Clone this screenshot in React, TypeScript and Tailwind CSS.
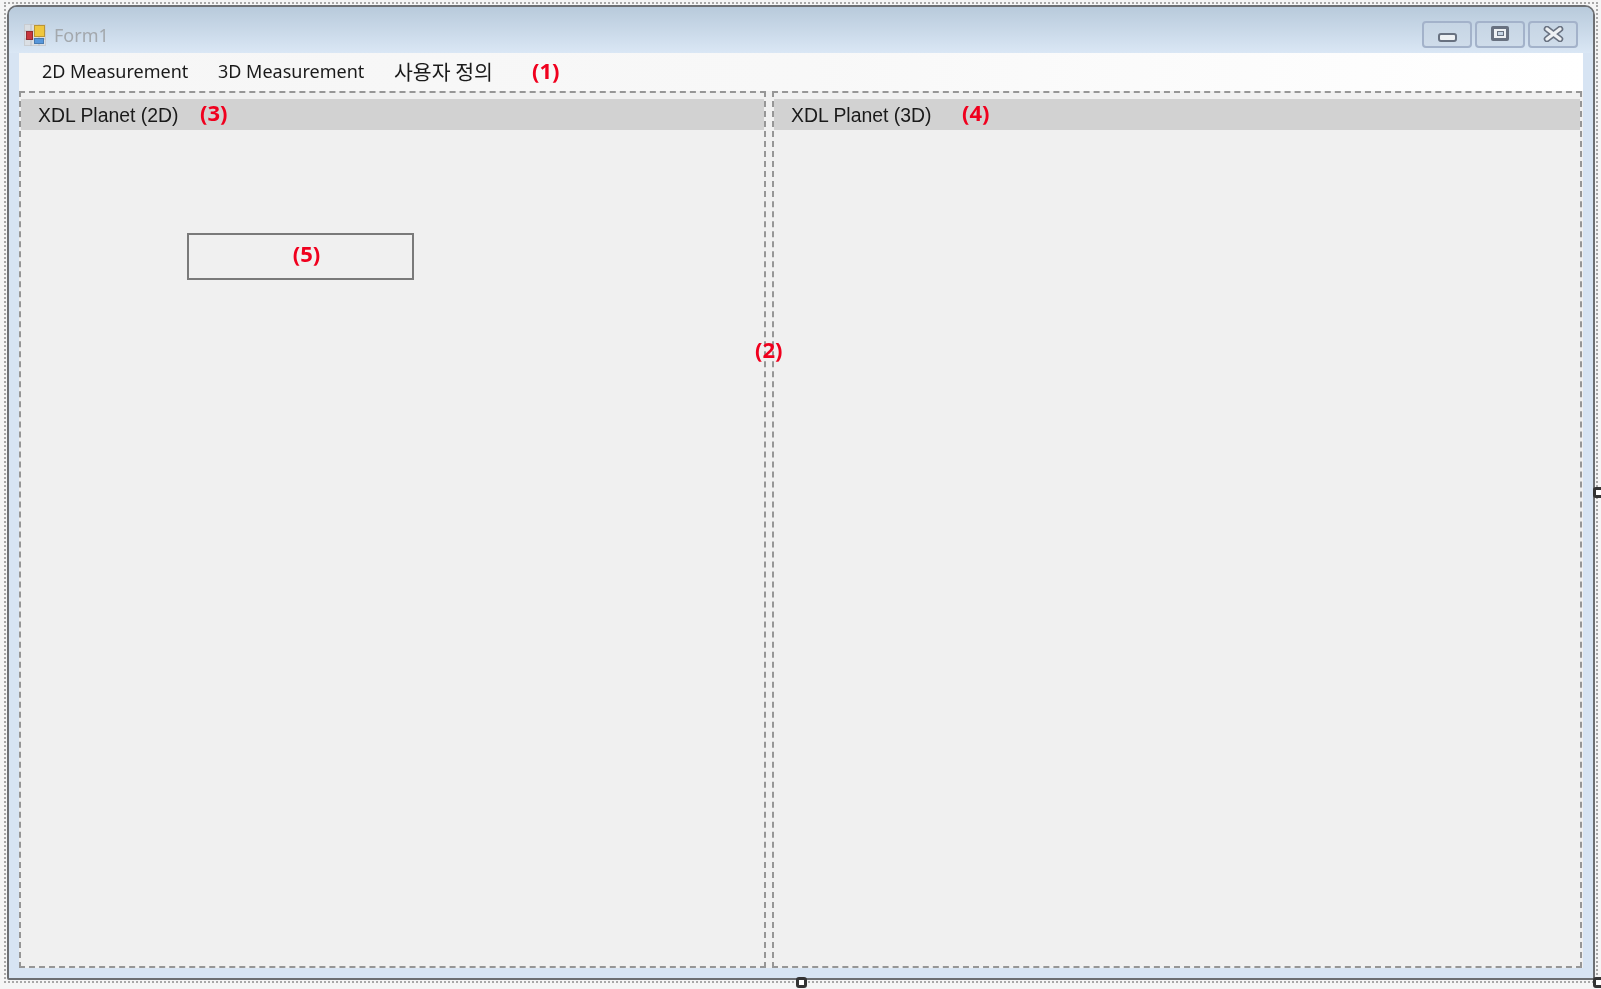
const label = "font-['Open_Sans',sans-serif] text-[22px] leading-none font-bold text-[#f0001e]";
const menu = "font-['Noto_Sans',sans-serif] text-[18px] leading-none text-[#1a1a1a]";
const head = "font-['Liberation_Sans',sans-serif] text-[19.4px] leading-none text-[#1a1a1a]";

function AppIcon() {
  return (
    <svg width="22" height="22" viewBox="0 0 22 22" className="opacity-90">
      <rect x="0.5" y="0.5" width="21" height="21" fill="#dcdfe3" stroke="#c9cbce" />
      <path d="M0 7h22M0 15h22M7 0v22M15 0v22" stroke="#b9bcc0" strokeWidth="1" />
      <rect x="10.5" y="1.5" width="10" height="11" fill="#f4c52c" stroke="#b98f24" />
      <rect x="2.5" y="7.5" width="6" height="8" fill="#c8252c" stroke="#8c1a20" />
      <rect x="10.5" y="14.5" width="9" height="5" fill="#4a90d9" stroke="#3a70aa" />
    </svg>
  );
}

function WinButton({ children }: { children: React.ReactNode }) {
  return (
    <div className="flex h-[27px] w-[50px] items-center justify-center rounded-[4px] border-2 border-[#a3b2ca] bg-gradient-to-b from-[#c6d5e4] to-[#cfdcea]">
      {children}
    </div>
  );
}

function Handle({ className }: { className: string }) {
  return <div className={`absolute h-[11px] w-[11px] rounded-[3px] border-[3px] border-[#333] bg-white ${className}`} />;
}

export default function App() {
  return (
    <div className="relative h-[989px] w-[1601px] overflow-hidden bg-[#f5f5f5] pt-[2px] pl-[4px] blur-[0.45px]">
      {/* designer selection frame */}
      <div className="h-[981px] w-[1594px] border-2 border-dotted border-[#a8a8a8] p-px">
        <div className="flex h-full flex-col rounded-t-[10px] rounded-b-[2px] border-2 border-[#6c6f73] bg-[#d7e4f3]">
          {/* title bar */}
          <div className="flex h-[46px] shrink-0 rounded-t-[8px] bg-gradient-to-b from-[#b8cadb] to-[#dae7f5] pl-[15px] pr-[15px]">
            <div className="flex items-center gap-[8px] pt-[10px]">
              <AppIcon />
              <span className="font-['Noto_Sans',sans-serif] text-[18px] leading-none text-[#a3a8ad]">Form1</span>
            </div>
            <div className="ml-auto flex gap-[3px] pt-[14px]">
              <WinButton>
                <div className="mt-[6px] h-[9px] w-[19px] rounded-[3px] border-2 border-[#687180] bg-[#eef1f4]" />
              </WinButton>
              <WinButton>
                <div className="mb-[2px] flex h-[15px] w-[18px] items-center justify-center rounded-[2px] border-[3px] border-[#687180] bg-[#eef1f4]">
                  <div className="h-[5px] w-[7px] border border-[#687180] bg-[#c6d5e4]" />
                </div>
              </WinButton>
              <WinButton>
                <svg width="21" height="16" viewBox="0 0 21 16" className="mb-[2px]">
                  <path d="M4 3l13 10M17 3L4 13" stroke="#687180" strokeWidth="6.5" strokeLinecap="round" />
                  <path d="M4 3l13 10M17 3L4 13" stroke="#eef1f4" strokeWidth="3.4" strokeLinecap="round" />
                </svg>
              </WinButton>
            </div>
          </div>

          {/* client area */}
          <div className="ml-[10px] flex h-[915px] w-[1564px] flex-col bg-[#f0f0f0]">
            <div className={`flex h-[38px] shrink-0 items-center bg-gradient-to-r from-[#f6f6f6] via-[#f8f8f8] to-white pb-[2px] pl-[23px] ${menu}`}>
              <span className="w-[176px]">2D Measurement</span>
              <span className="w-[176px]">3D Measurement</span>
              <span className="w-[138px] font-['Noto_Sans_CJK_KR',sans-serif] text-[20.5px]">사용자 정의</span>
              <span className={`mb-[3px] ${label}`}>(1)</span>
            </div>

            <div className="relative flex h-[877px] gap-[6px]">
              <div className="h-full w-[747px] border-2 border-dashed border-[#969696] pt-[6px]">
                <div className={`flex h-[31px] items-center bg-[#d2d2d2] pl-[17px] ${head}`}>
                  <span className="w-[162px] pt-[2px]">XDL Planet (2D)</span>
                  <span className={`mb-[6px] ${label}`}>(3)</span>
                </div>
                <div className={`mt-[103px] ml-[166px] flex h-[47px] w-[227px] items-center justify-center border-2 border-[#7a7a7a] pb-[8px] pl-[12px] ${label}`}>
                  (5)
                </div>
              </div>
              <div className="h-full w-[810px] border-2 border-dashed border-[#969696] pt-[6px]">
                <div className={`flex h-[31px] items-center bg-[#d2d2d2] pl-[17px] ${head}`}>
                  <span className="w-[171px] pt-[2px]">XDL Planet (3D)</span>
                  <span className={`mb-[6px] ${label}`}>(4)</span>
                </div>
              </div>
              <span className={`absolute top-[247px] left-[736px] ${label}`}>(2)</span>
            </div>
          </div>
        </div>
      </div>

      <Handle className="top-[487px] left-[1593px]" />
      <Handle className="top-[977px] left-[796px]" />
      <Handle className="top-[977px] left-[1593px]" />
    </div>
  );
}
